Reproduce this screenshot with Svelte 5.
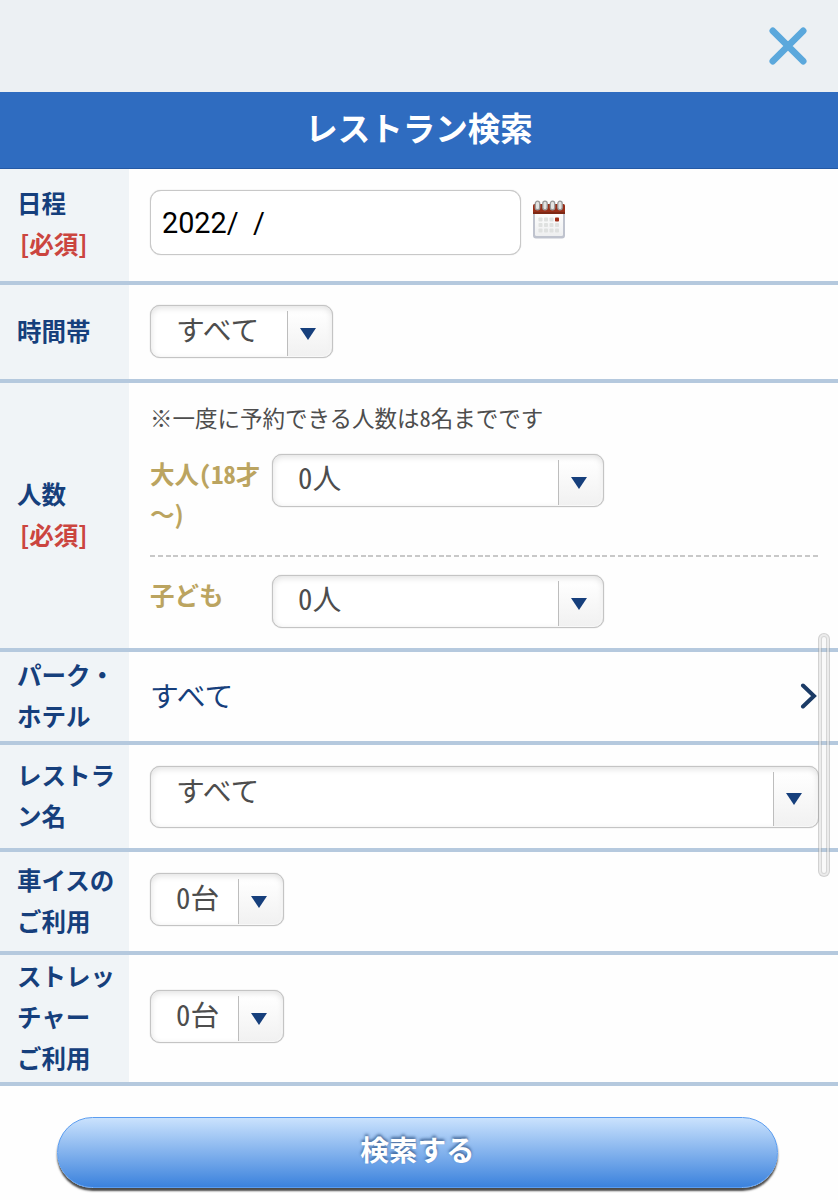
<script lang="ts">
  let date: string = $state("2022/  /");
  let time: string = $state("すべて");
  let adults: string = $state("0人");
  let children: string = $state("0人");
  let park: string = $state("すべて");
  let restaurant: string = $state("すべて");
  let wheelchairs: string = $state("0台");
  let stretchers: string = $state("0台");
</script>

{#snippet dropdown(value: string, size: string)}
  <button class="dropdown {size}">
    <span class="value">{value}</span>
    <span class="arrow">
      <svg width="16" height="12" viewBox="0 0 16 12"><path d="M0 0H16L8 12Z" fill="#163f7c" /></svg>
    </span>
  </button>
{/snippet}

<div class="page">
  <header>
    <button class="close" aria-label="閉じる">
      <svg width="38" height="38" viewBox="0 0 38 38">
        <path d="M3.8 3.8L34.2 34.2M34.2 3.8L3.8 34.2" stroke="#5ba8dc" stroke-width="6.6" stroke-linecap="round" />
      </svg>
    </button>
  </header>

  <h1>レストラン検索</h1>

  <div class="row date-row">
    <div class="label">
      <span>日程</span>
      <span class="required">[必須]</span>
    </div>
    <div class="content">
      <input type="text" bind:value={date} />
      <svg class="calendar" width="34" height="40" viewBox="0 0 34 40">
        <defs>
          <linearGradient id="paper" x1="0" y1="0" x2="0" y2="1">
            <stop offset="0" stop-color="#fff" />
            <stop offset="1" stop-color="#eeeff0" />
          </linearGradient>
        </defs>
        <rect x="1" y="6" width="32" height="32.5" rx="3" fill="#bfc3ce" />
        <rect x="3" y="10" width="28" height="26" rx="1.5" fill="url(#paper)" />
        <path d="M1 5.5Q1 4 2.5 4H31.5Q33 4 33 5.5V14H1Z" fill="#982f19" />
        <path d="M1 12H33V14H1Z" fill="#7d2815" />
        {#each [5.5, 13, 20.5, 28] as x}
          <rect x={x - 2.2} y="1.2" width="4.4" height="8.6" rx="2.2" fill="#e4e4e2" stroke="#999" stroke-width="1.3" />
        {/each}
        {#each [17.5, 23, 28.5] as y, r}
          {#each [6.5, 12, 17.5, 23] as x, c}
            <rect {x} {y} width="4" height="4" rx="0.8" fill={r === 0 && c === 3 ? "#a12c16" : "#dfe1e0"} />
          {/each}
        {/each}
      </svg>
    </div>
  </div>

  <div class="row time-row">
    <div class="label">
      <span>時間帯</span>
    </div>
    <div class="content">{@render dropdown(time, "medium")}</div>
  </div>

  <div class="row people-row">
    <div class="label">
      <span>人数</span>
      <span class="required">[必須]</span>
    </div>
    <div class="content">
      <p class="note">※一度に予約できる人数は8名までです</p>
      <div class="person adult">
        <span class="person-label">大人(18才<br /><span class="tilde">～)</span></span>
        {@render dropdown(adults, "wide")}
      </div>
      <div class="person child">
        <span class="person-label">子ども</span>
        {@render dropdown(children, "wide")}
      </div>
    </div>
  </div>

  <div class="row park-row">
    <div class="label">
      <span>パーク・</span>
      <span>ホテル</span>
    </div>
    <div class="content">
      <span class="park">{park}</span>
      <svg class="chevron" width="17" height="26" viewBox="0 0 17 26">
        <path d="M3 2.5L14 13L3 23.5" fill="none" stroke="#1b3b66" stroke-width="4" stroke-linecap="round" />
      </svg>
    </div>
  </div>

  <div class="row restaurant-row">
    <div class="label">
      <span>レストラ</span>
      <span>ン名</span>
    </div>
    <div class="content">{@render dropdown(restaurant, "full")}</div>
  </div>

  <div class="row wheelchair-row">
    <div class="label">
      <span>車イスの</span>
      <span>ご利用</span>
    </div>
    <div class="content">{@render dropdown(wheelchairs, "small")}</div>
  </div>

  <div class="row stretcher-row">
    <div class="label">
      <span>ストレッ</span>
      <span>チャー</span>
      <span>ご利用</span>
    </div>
    <div class="content">{@render dropdown(stretchers, "small")}</div>
  </div>

  <button class="search">検索する</button>

  <div class="scrollbar"></div>
</div>

<style>
  :global(body) {
    margin: 0;
    background: #fefefe;
  }

  .page {
    position: relative;
    height: 1200px;
    overflow: hidden;
    background: #fefefe;
    color: #4d4d4d;
    font-family: "Noto Sans CJK JP", sans-serif;
    font-feature-settings: "hwid";
  }

  button {
    padding: 0;
    font-family: inherit;
    font-feature-settings: inherit;
    box-sizing: border-box;
  }

  svg {
    display: block;
  }

  header {
    height: 92px;
    display: flex;
    align-items: center;
    justify-content: flex-end;
    padding-right: 31px;
    box-sizing: border-box;
    background: #ecf0f3;
  }

  .close {
    border: 0;
    background: none;
  }

  h1 {
    margin: 0;
    height: 77px;
    box-sizing: border-box;
    border-bottom: 1px solid #2459a5;
    background: #2f6cc0;
    color: #fff;
    font-size: 32.5px;
    font-weight: 700;
    line-height: 70px;
    text-align: center;
  }

  .row {
    display: flex;
    box-sizing: border-box;
    border-bottom: 4px solid #b5c9de;
  }

  .date-row { height: 116px; }
  .time-row { height: 98px; }
  .people-row { height: 269px; }
  .park-row { height: 93px; }
  .restaurant-row { height: 107px; }
  .wheelchair-row { height: 103px; }
  .stretcher-row { height: 131px; }

  .label {
    flex: none;
    width: 129px;
    box-sizing: border-box;
    padding: 0 0 2px 17px;
    display: flex;
    flex-direction: column;
    justify-content: center;
    background: #f0f4f7;
    color: #163f7c;
    font-size: 24.5px;
    font-weight: 700;
    line-height: 40.7px;
    white-space: nowrap;
  }

  .required {
    padding-left: 3px;
    color: #cb453f;
    font-feature-settings: normal;
  }

  .content {
    flex: 1;
    min-width: 0;
    padding: 20px 19px 0 21px;
  }

  .date-row .content {
    display: flex;
    align-items: flex-start;
    padding-top: 21px;
  }

  input {
    width: 371px;
    height: 65px;
    box-sizing: border-box;
    padding: 0 11px;
    border: 1px solid #c8c8c8;
    border-radius: 11px;
    background: #fff;
    box-shadow: 0 0 1px #bbb;
    color: #000;
    font-family: Roboto, sans-serif;
    font-size: 28.8px;
    font-feature-settings: normal;
  }

  .calendar {
    margin: 10px 0 0 11px;
  }

  .dropdown {
    display: flex;
    height: 53px;
    border: 1px solid #c4c4c4;
    border-radius: 10px;
    background: #fff;
    box-shadow: 0 0 1px #aaa, inset 0 2px 6px rgba(0, 0, 0, 0.12);
    color: #4d4d4d;
    font-size: 28.8px;
    text-align: left;
  }

  .small { width: 134px; }
  .medium { width: 183px; }
  .wide { width: 332px; }
  .full { width: 669px; height: 62px; }

  .value {
    flex: 1;
    padding-left: 25px;
    line-height: 45px;
    white-space: nowrap;
  }

  .wide .value {
    line-height: 44px;
  }

  .arrow {
    flex: none;
    width: 43px;
    box-sizing: border-box;
    margin: 5px 2px 1px 0;
    display: flex;
    align-items: center;
    justify-content: center;
    padding-right: 2px;
    border-left: 1px solid #bdbdbd;
    border-radius: 0 0 7px 0;
    background: linear-gradient(rgba(240, 240, 240, 0), #f1f1f1);
  }

  .people-row .content {
    padding-top: 16px;
  }

  .note {
    margin: 0;
    font-size: 22.5px;
    line-height: 36px;
  }

  .person {
    display: flex;
    align-items: flex-start;
  }

  .person-label {
    width: 122px;
    color: #bba460;
    font-size: 24.5px;
    font-weight: 700;
    line-height: 40px;
    white-space: nowrap;
  }

  .tilde {
    font-feature-settings: normal;
  }

  .adult {
    height: 103px;
    padding-top: 19px;
    background: repeating-linear-gradient(90deg, #c8c8c8 0 5px, transparent 5px 7.8px) 0 100% / 100% 2px no-repeat;
  }

  .adult .dropdown {
    margin-top: 0;
  }

  .child {
    padding-top: 18px;
  }

  .park-row .content {
    display: flex;
    align-items: center;
    justify-content: space-between;
    padding-top: 0;
    padding-right: 21px;
  }

  .park {
    padding-bottom: 5px;
    color: #163f7c;
    font-size: 28.8px;
  }

  .chevron {
    margin-bottom: 1px;
  }

  .restaurant-row .content,
  .wheelchair-row .content {
    padding-top: 21px;
  }

  .stretcher-row .content {
    padding-top: 35px;
  }

  .search {
    display: block;
    width: 721px;
    height: 71px;
    margin: 31px auto 0 57px;
    border: 1.5px solid #5b9df0;
    border-radius: 36px;
    background: linear-gradient(#cae2fd, #3b82dd);
    box-shadow: 0 3px 2px #4b4b4b;
    color: #fff;
    font-size: 28.6px;
    font-weight: 700;
    line-height: 60px;
    padding-bottom: 7px;
    text-shadow: 0 -2px 3px rgba(20, 55, 105, 0.65);
  }

  .scrollbar {
    position: absolute;
    top: 633px;
    left: 818px;
    width: 12px;
    height: 244px;
    box-sizing: border-box;
    border: 1px solid rgba(150, 150, 150, 0.4);
    border-radius: 6px;
    background: rgba(210, 210, 210, 0.1);
    box-shadow: inset 0 0 0 2px rgba(255, 255, 255, 0.5), inset 0 0 0 3px rgba(150, 150, 150, 0.35);
  }
</style>
